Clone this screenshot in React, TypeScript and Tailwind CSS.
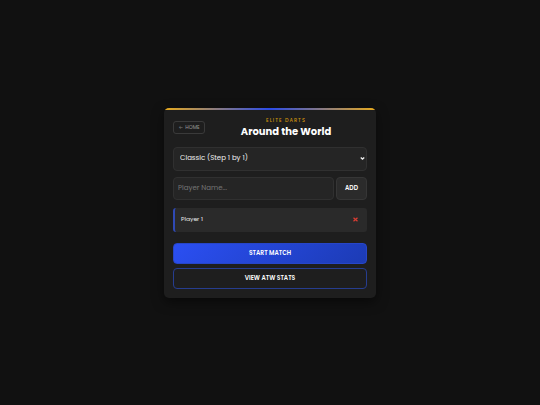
import React, { useState } from 'react';

const modes = ['Classic (Step 1 by 1)', 'Doubles Only', 'Triples Only'];

const fieldClass = 'rounded-[4px] border border-[#303030] bg-[#252525] outline-none';
const wideButton = 'h-[21px] w-full cursor-pointer rounded-[4px] border text-[6px] font-semibold uppercase leading-none text-white';

export default function App() {
  const [mode, setMode] = useState(modes[0]);
  const [name, setName] = useState('');
  const [players, setPlayers] = useState(['Player 1']);

  const addPlayer = (e: React.FormEvent) => {
    e.preventDefault();
    if (!name.trim()) return;
    setPlayers(prev => [...prev, name.trim()]);
    setName('');
  };

  return (
    <div className="flex min-h-screen items-center justify-center bg-[#111111] font-['Poppins','Inter',sans-serif] text-white">
      <main className="w-full max-w-[212px] overflow-hidden rounded-[5px] bg-[#1e1e1e] shadow-[0_4px_12px_rgba(0,0,0,0.5)]">
        <div className="h-[2px] bg-[linear-gradient(90deg,#e8aa1c,#2b4be8,#e8aa1c)]" />

        <div className="px-[9px] pt-[7px] pb-[9px]">
          <header className="flex items-center">
            <button className="flex h-[13px] w-8 cursor-pointer items-center justify-center gap-[2px] rounded-[3px] border border-[#3a3a3a] text-[5px] leading-none text-[#999999]">
              <span className="text-[#777777]">←</span> HOME
            </button>
            <div className="flex-1 text-center">
              <p className="text-[5px] font-medium uppercase leading-[7px] tracking-[1px] text-[#d0940f]">Elite Darts</p>
              <h1 className="text-[10px] font-bold leading-[15px]">Around the World</h1>
            </div>
          </header>

          {/* Game mode */}
          <div className="relative mt-2">
            <select
              aria-label="Game mode"
              value={mode}
              onChange={e => setMode(e.target.value)}
              className={`block h-6 w-full appearance-none px-[6px] text-[7px] text-[#f0f0f0] ${fieldClass}`}
            >
              {modes.map(m => <option key={m}>{m}</option>)}
            </select>
            <svg viewBox="0 0 10 6" className="pointer-events-none absolute top-[10px] right-[2px] h-[3px] w-[5px]" fill="none" stroke="#eeeeee" strokeWidth="2.6">
              <path d="M1.5 1l3.5 3.2L8.5 1" />
            </svg>
          </div>

          <form onSubmit={addPlayer} className="mt-[6px] flex gap-[2px]">
            <input
              aria-label="Player name"
              value={name}
              onChange={e => setName(e.target.value)}
              placeholder="Player Name..."
              className={`h-[23px] min-w-0 flex-1 px-1 text-[7px] placeholder:text-[#757575] ${fieldClass}`}
            />
            <button type="submit" className="h-[23px] w-[31px] cursor-pointer rounded-[4px] border border-[#363636] bg-[#2b2b2b] text-[6px] font-semibold leading-none">
              ADD
            </button>
          </form>

          {/* Players */}
          <ul className="mt-2 space-y-1">
            {players.map((player, i) => (
              <li key={i} className="flex h-6 items-center justify-between rounded-[3px] border-l-2 border-[#2f49b4] bg-[#2a2a2a] pr-[9px] pl-[6px] text-[6px]">
                <span className="text-[#f0f0f0]">{player}</span>
                <button
                  aria-label={`Remove ${player}`}
                  onClick={() => setPlayers(prev => prev.filter((_, n) => n !== i))}
                  className="cursor-pointer"
                >
                  <svg viewBox="0 0 10 10" className="size-[5px]" fill="none" stroke="#d63c32" strokeWidth="2.6">
                    <path d="M1 1.5l8 7M9 1.5l-8 7" />
                  </svg>
                </button>
              </li>
            ))}
          </ul>

          <div className="mt-[11px] flex flex-col gap-1">
            <button className={`${wideButton} border-[#2746c8] bg-[linear-gradient(135deg,#2b4ff2,#1c3bb5)]`}>Start Match</button>
            <button className={`${wideButton} border-[#263d8f]`}>View ATW Stats</button>
          </div>
        </div>
      </main>
    </div>
  );
}
